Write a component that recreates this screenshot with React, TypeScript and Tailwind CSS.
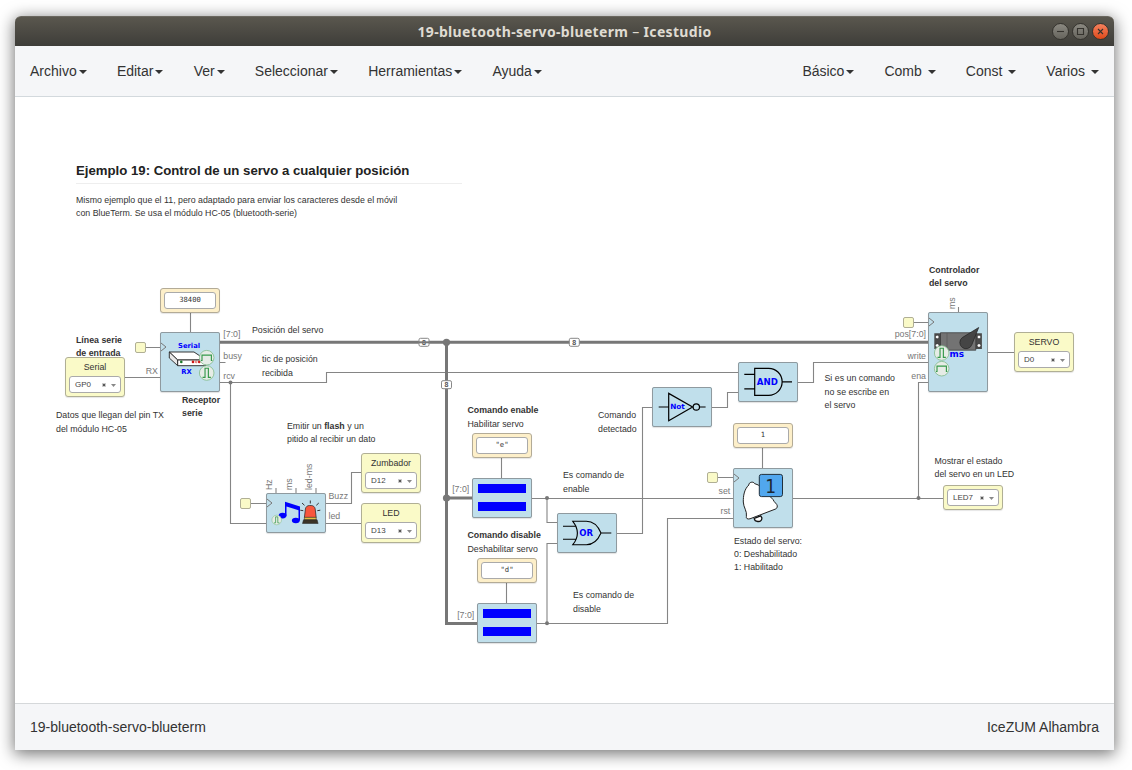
import type { ReactNode } from "react";

const SANS = "font-['Liberation_Sans',Arial,sans-serif]";

function MenuItem({ label, spaced = false }: { label: string; spaced?: boolean }) {
  return (
    <button className="flex items-center text-sm leading-5 text-[#333]">
      <span>{label}</span>
      <span
        className={`${spaced ? "ml-[6px]" : "ml-[2px]"} mt-[2px] h-0 w-0 border-x-4 border-t-4 border-x-transparent border-t-[#333]`}
      />
    </button>
  );
}

function Note({ at, children, leading = "leading-[13px]" }: { at: string; children: ReactNode; leading?: string }) {
  return <p className={`absolute whitespace-nowrap text-[8.8px] text-[#333] ${leading} ${at}`}>{children}</p>;
}

function Block({ at, size = "h-10 w-[60px]", children }: { at: string; size?: string; children: ReactNode }) {
  return (
    <div className={`absolute rounded-[2px] bg-[#c0dfeb] shadow-[0_1px_1px_rgba(0,0,0,0.12)] outline outline-1 -outline-offset-1 outline-[#8f9a9f] ${size} ${at}`}>
      {children}
    </div>
  );
}

function Constant({ at, value }: { at: string; value: string }) {
  return (
    <div className={`absolute flex h-[25px] w-[60px] rounded-[3px] border border-[#b3ab97] bg-[#fdefc9] p-[3px] shadow-[0_1px_1px_rgba(0,0,0,0.1)] ${at}`}>
      <div className="flex flex-1 items-center justify-center rounded-[3px] border border-[#aaa] bg-white font-['DejaVu_Sans_Mono',monospace] text-[7.2px] text-[#333]">
        {value}
      </div>
    </div>
  );
}

function Select({ value }: { value: string }) {
  return (
    <div className="flex h-[17px] shrink-0 items-center rounded-[3px] border border-[#aaa] bg-white pl-[5px] pr-1 text-[8px] leading-none text-[#444]">
      <span className="flex-1">{value}</span>
      <svg className="mr-[5px] h-1 w-1" viewBox="0 0 4 4" stroke="#555" strokeWidth="1.2">
        <path d="M.6.6l2.8 2.8M3.4.6L.6 3.4" />
      </svg>
      <svg className="mt-px h-[3px] w-[5px]" viewBox="0 0 5 3" fill="#888">
        <path d="M0 0h5L2.5 3z" />
      </svg>
    </div>
  );
}

function Pin({ at, label, value }: { at: string; label?: string; value: string }) {
  return (
    <div
      className={`absolute flex w-[60px] flex-col rounded-[3px] border border-[#b0af95] bg-[#fafac8] px-[3px] shadow-[0_1px_1px_rgba(0,0,0,0.1)] ${label ? "h-10" : "h-[25px] pt-[3px]"} ${at}`}
    >
      {label && <div className="h-[18px] text-center text-[8.8px] leading-[18px] text-[#333]">{label}</div>}
      <Select value={value} />
    </div>
  );
}

function ClockPort({ at }: { at: string }) {
  return <div className={`absolute h-[11px] w-[11px] rounded-[2px] border border-[#b0af95] bg-[#fafac8] ${at}`} />;
}

function Pulse({ x, y, r = 7.3, wide = false }: { x: number; y: number; r?: number; wide?: boolean }) {
  return (
    <g transform={`translate(${x} ${y}) scale(${r / 7})`} fill="none">
      <circle r="7" fill="#e6ece6" stroke="#84bd8e" strokeWidth=".8" />
      <path
        d={wide ? "M-5.5 2.7h1V-2.5h9v5.2h1" : "M-4 4.2h2.4v-8.8h3.2v8.8H4"}
        stroke="#35994a"
        strokeWidth="1.1"
      />
    </g>
  );
}

const ClockMark = ({ y }: { y: number }) => (
  <path d={`M1 ${y - 4}l5 4-5 4`} fill="none" stroke="#777" strokeWidth="1" />
);

const BLUE_TEXT = "font-['DejaVu_Sans',sans-serif] font-bold fill-[#0000ff]";

const WIRES = [
  "M190.5 312V333M501.5 458V479M506.5 583V604M762.5 448V469",
  "M146 347.5H160M125 377.5H160M220 362.5H225.5",
  "M220 382.5H326.5V372.5H738M230.5 382.5V523.5H266",
  "M251 503.5H266M326 503.5H351.5V472.5H361M326 523.5H361",
  "M532 498.5H733M547 498.5V522.5H557",
  "M537 623.5H667.5V518.5H733M547 623.5V543.5H557",
  "M617 533.5H642.5V407.5H652M712 407.5H727.5V392.5H738",
  "M798 382.5H813.5V362.5H928",
  "M718 477.5H733M793 498.5H943M918.5 498.5V382.5H928",
  "M914 322.5H928M988 352.5H1014M958.5 307V312",
  "M276 488V493M296 488V493M316 488V493",
];

const PORT_LABELS: { x: number; y: number; text: string; end?: boolean }[] = [
  { x: 223.3, y: 337, text: "[7:0]" },
  { x: 223.3, y: 359, text: "busy" },
  { x: 223.3, y: 379, text: "rcv" },
  { x: 158, y: 374, text: "RX", end: true },
  { x: 328.5, y: 499, text: "Buzz" },
  { x: 328.5, y: 519, text: "led" },
  { x: 469.3, y: 492, text: "[7:0]", end: true },
  { x: 474.3, y: 618, text: "[7:0]", end: true },
  { x: 730.3, y: 494, text: "set", end: true },
  { x: 730.3, y: 514, text: "rst", end: true },
  { x: 926, y: 337, text: "pos[7:0]", end: true },
  { x: 926, y: 359, text: "write", end: true },
  { x: 926, y: 379, text: "ena", end: true },
];

const VERTICAL_LABELS = [
  { x: 271.5, y: 490, text: "Hz" },
  { x: 292, y: 490, text: "ms" },
  { x: 312, y: 490, text: "led-ms" },
  { x: 955, y: 309, text: "ms" },
];

const BUS_BADGES = [
  [424, 342.3],
  [574.3, 342.3],
  [446.5, 384.7],
];

function Wiring() {
  return (
    <svg className={`absolute left-0 top-0 ${SANS}`} width="1132" height="770" fill="none">
      <g stroke="#858585" strokeWidth="1.1">
        {WIRES.map((d) => (
          <path key={d} d={d} />
        ))}
      </g>
      <path d="M220 342.3H928M446.5 342V623.4H477M446.5 498H472" stroke="#777" strokeWidth="3" />
      <g fill="#777">
        <circle cx="446.5" cy="342.3" r="3.6" />
        <circle cx="446.5" cy="498" r="3.6" />
        <circle cx="230.5" cy="382.5" r="2" />
        <circle cx="547" cy="498" r="2" />
        <circle cx="547" cy="623.3" r="2" />
        <circle cx="918.5" cy="498" r="2" />
      </g>
      {BUS_BADGES.map(([x, y]) => (
        <g key={`${x}-${y}`} transform={`translate(${x} ${y})`}>
          <rect x="-5" y="-4" width="10" height="8" rx="1.5" fill="#fff" stroke="#888" />
          <text y="2.6" textAnchor="middle" fontSize="7" fontWeight="bold" fill="#555">
            8
          </text>
        </g>
      ))}
      <path d="M419 342.3h10" stroke="#777" strokeWidth="2" />
      <g fontSize="8.8" fill="#777">
        {PORT_LABELS.map((l) => (
          <text key={`${l.x}-${l.y}`} x={l.x} y={l.y} textAnchor={l.end ? "end" : "start"}>
            {l.text}
          </text>
        ))}
        {VERTICAL_LABELS.map((l) => (
          <text key={`${l.x}-${l.y}`} transform={`translate(${l.x} ${l.y}) rotate(-90)`}>
            {l.text}
          </text>
        ))}
      </g>
    </svg>
  );
}

function SerialArt() {
  return (
    <svg width="60" height="60" fill="none">
      <ClockMark y={15} />
      <text x="18" y="15.5" className={`${BLUE_TEXT} text-[6.8px]`}>Serial</text>
      <g stroke="#222" strokeWidth=".9" fill="#fff" strokeLinejoin="round">
        <path d="M9.3 20H34L46 28H17.7z" />
        <path d="M9.3 20v6l8.4 7.7V28z" fill="#e8e8e8" />
        <path d="M17.7 28H46v5.7H17.7z" />
      </g>
      <circle cx="21.3" cy="29.9" r="1.3" fill="#1c7a2b" />
      <circle cx="33" cy="29.9" r="1.3" fill="#d01818" />
      <circle cx="36.2" cy="29.9" r=".9" stroke="#d01818" strokeWidth=".6" />
      <circle cx="39.2" cy="29.9" r="1.3" fill="#d01818" />
      <text x="21.3" y="41.7" className={`${BLUE_TEXT} text-[6.8px]`}>RX</text>
      <Pulse x={46.7} y={25.7} wide />
      <Pulse x={46.7} y={41} />
    </svg>
  );
}

function BeeperArt() {
  return (
    <svg width="60" height="40" fill="none">
      <ClockMark y={10} />
      <g fill="#0000ff">
        <ellipse cx="16.6" cy="22.6" rx="3.9" ry="2.8" />
        <ellipse cx="29.8" cy="27.5" rx="3.9" ry="2.8" />
        <path d="M19 8.7l15 4.7v14h-1.5V17.2l-12-3.7v9.3H19z" />
      </g>
      <Pulse x={10.7} y={27} r={4.8} />
      <path d="M38.4 24.5l1-8.5c.3-2.2 2-3.5 4-3.5h1.8c2 0 3.7 1.3 4 3.5l1 8.5z" fill="#f8573d" stroke="#222" strokeWidth=".7" />
      <path d="M38.4 24.3h11.8v2.6H38.4z" fill="#e9c044" stroke="#222" strokeWidth=".5" />
      <path d="M37.5 26.8h13.6l1 3.7H36.5z" fill="#3b3428" stroke="#222" strokeWidth=".5" />
      <path
        d="M44.3 7.5v3M36 10l2.5 2.3M52.8 10l-2.5 2.3M34.3 17.2l3 .5M54.3 17.2l-3 .5"
        stroke="#333"
        strokeWidth="1"
      />
    </svg>
  );
}

function EqualsArt() {
  return (
    <div className="flex h-full flex-col gap-[9px] px-1.5 pt-1.5">
      <div className="h-[9px] bg-[#0000ff]" />
      <div className="h-[9px] bg-[#0000ff]" />
    </div>
  );
}

function OrArt() {
  return (
    <svg width="60" height="40" fill="none">
      <path
        d="M6 13.3h13.5M6 26.2h13.5M44 20h10.3M15.8 8.3h13.6C36 8.3 41 13 44 20C41 27 36 31.7 29.4 31.7H15.8Q25 20 15.8 8.3z"
        stroke="#000"
        strokeWidth="1.1"
      />
      <text x="22.2" y="22.8" className={`${BLUE_TEXT} text-[8.5px]`}>OR</text>
    </svg>
  );
}

function NotArt() {
  return (
    <svg width="60" height="40" fill="none">
      <path d="M6.7 20h10M47.6 20h6M16.7 6.4v27.3L40.6 20z" stroke="#000" strokeWidth="1.2" />
      <circle cx="44.3" cy="20" r="3.2" stroke="#000" strokeWidth="1.2" />
      <text x="18.2" y="21.8" className={`${BLUE_TEXT} text-[7.3px]`}>Not</text>
    </svg>
  );
}

function AndArt() {
  return (
    <svg width="60" height="40" fill="none">
      <path
        d="M6.3 12.4h10.4M6.3 26.8h10.4M44 19.8h10M16.7 6.3h14A13.4 13.5 0 0 1 30.7 33.4h-14z"
        stroke="#000"
        strokeWidth="1.2"
      />
      <text x="18.8" y="22.7" className={`${BLUE_TEXT} text-[8.6px]`}>AND</text>
    </svg>
  );
}

function BellArt() {
  return (
    <svg width="60" height="60" fill="none">
      <ClockMark y={10} />
      <path d="M21.2 50.5c.6 4.2 7.6 4 7.7-.6l-1.2-2z" fill="#fff" stroke="#111" strokeWidth="1.3" />
      <path
        d="M15.8 17c-.3-2.8 4.8-4 5.8-1.4l4 1.5L40 31.5c1 2.8 4.3 4.5 4.3 6.4 0 2-.8 2.8-2.2 3.3L17 50.8c-2.6.6-4.2-.2-3.6-2.5.9-5.3-3-8.8-3.1-14.3-.1-6 .8-12.5 5.5-17z"
        fill="#fff"
        stroke="#222"
        strokeWidth="1"
      />
      <rect x="26.3" y="6.4" width="23.2" height="22.2" rx="2.2" fill="#51a7ee" stroke="#20303c" strokeWidth="1" />
      <text x="37.6" y="24.5" textAnchor="middle" className="fill-[#1c2630] font-['DejaVu_Sans_Condensed','DejaVu_Sans',sans-serif] text-[19px]">1</text>
    </svg>
  );
}

function ServoArt() {
  return (
    <svg width="60" height="80" fill="none">
      <ClockMark y={10} />
      <path d="M6.3 21.3h47.6v15.8H6.3z" fill="#4a4a4a" />
      <path d="M12.5 20.7h35.3v17.5H12.5z" fill="#737373" stroke="#333" strokeWidth=".7" />
      <path d="M19 21v17" stroke="#555" strokeWidth=".6" />
      <g fill="#fff" stroke="#222" strokeWidth=".5">
        <circle cx="9.2" cy="25" r="1.8" />
        <circle cx="9.2" cy="33.5" r="1.8" />
        <circle cx="51" cy="25" r="1.8" />
        <circle cx="51" cy="33.5" r="1.8" />
      </g>
      <path d="M50.7 15.5L34.3 25.6a6.2 6.2 0 1 0 9.5 7.2z" fill="#454545" stroke="#222" strokeWidth=".7" />
      <text x="21.6" y="44.5" className={`${BLUE_TEXT} text-[8.9px]`}>ms</text>
      <Pulse x={13.7} y={41} />
      <Pulse x={13.7} y={56.7} wide />
    </svg>
  );
}

function Diagram() {
  return (
    <div className="absolute -left-[15px] -top-[97px] h-[770px] w-[1132px]">
      <Wiring />

      <div className="absolute left-[76px] top-[161px] w-[386px] border-b border-[#eee]">
        <h1 className="h-[22px] whitespace-nowrap text-[13.2px] font-bold leading-5 text-[#222]">
          Ejemplo 19: Control de un servo a cualquier posición
        </h1>
      </div>
      <Note at="left-[76px] top-[194px]">
        Mismo ejemplo que el 11, pero adaptado para enviar los caracteres desde el móvil
        <br />
        con BlueTerm. Se usa el módulo HC-05 (bluetooth-serie)
      </Note>

      <Note at="left-[76px] top-[334px]"><b>Línea serie<br />de entrada</b></Note>
      <Note at="left-[56px] top-[408px]" leading="leading-[14px]">Datos que llegan del pin TX<br />del módulo HC-05</Note>
      <Note at="left-[182px] top-[394px]"><b>Receptor<br />serie</b></Note>
      <Note at="left-[252px] top-[324px]">Posición del servo</Note>
      <Note at="left-[262px] top-[352px]" leading="leading-[14px]">tic de posición<br />recibida</Note>
      <Note at="left-[287px] top-[420px]">Emitir un <b>flash</b> y un<br />pitido al recibir un dato</Note>
      <Note at="left-[467.5px] top-[403px]" leading="leading-[14px]"><b>Comando enable</b><br />Habilitar servo</Note>
      <Note at="left-[598px] top-[408px]" leading="leading-[14px]">Comando<br />detectado</Note>
      <Note at="left-[563px] top-[468px]" leading="leading-[14px]">Es comando de<br />enable</Note>
      <Note at="left-[467.5px] top-[528px]" leading="leading-[14px]"><b>Comando disable</b><br />Deshabilitar servo</Note>
      <Note at="left-[573px] top-[588px]" leading="leading-[14px]">Es comando de<br />disable</Note>
      <Note at="left-[824.5px] top-[372px]" leading="leading-[13.5px]">Si es un comando<br />no se escribe en<br />el servo</Note>
      <Note at="left-[929px] top-[264px]"><b>Controlador<br />del servo</b></Note>
      <Note at="left-[934.5px] top-[455px]">Mostrar el estado<br />del servo en un LED</Note>
      <Note at="left-[734px] top-[535px]">Estado del servo:<br />0: Deshabilitado<br />1: Habilitado</Note>

      <Constant at="left-[160px] top-[287.5px]" value="38400" />
      <Constant at="left-[472px] top-[433px]" value={'"e"'} />
      <Constant at="left-[477px] top-[558px]" value={'"d"'} />
      <Constant at="left-[733px] top-[423px]" value="1" />

      <Pin at="left-[65px] top-[357px]" label="Serial" value="GP0" />
      <Pin at="left-[361px] top-[453px]" label="Zumbador" value="D12" />
      <Pin at="left-[361px] top-[503px]" label="LED" value="D13" />
      <Pin at="left-[1014px] top-[332px]" label="SERVO" value="D0" />
      <Pin at="left-[943px] top-[485px]" value="LED7" />

      <ClockPort at="left-[135px] top-[342px]" />
      <ClockPort at="left-[240px] top-[498px]" />
      <ClockPort at="left-[707px] top-[472px]" />
      <ClockPort at="left-[903px] top-[317px]" />

      <Block at="left-[160px] top-[332px]" size="h-[60px] w-[60px]"><SerialArt /></Block>
      <Block at="left-[266px] top-[493px]"><BeeperArt /></Block>
      <Block at="left-[472px] top-[478px]"><EqualsArt /></Block>
      <Block at="left-[477px] top-[603px]"><EqualsArt /></Block>
      <Block at="left-[557px] top-[513px]"><OrArt /></Block>
      <Block at="left-[652px] top-[387px]"><NotArt /></Block>
      <Block at="left-[738px] top-[362px]"><AndArt /></Block>
      <Block at="left-[733px] top-[468px]" size="h-[60px] w-[60px]"><BellArt /></Block>
      <Block at="left-[928px] top-[312px]" size="h-20 w-[60px]"><ServoArt /></Block>
    </div>
  );
}

function WindowButton({ close = false, children }: { close?: boolean; children: ReactNode }) {
  return (
    <button
      className={`flex h-[17px] w-[17px] items-center justify-center rounded-full border border-[#35332e] bg-linear-to-b ${close ? "from-[#f4805c] to-[#dd4814]" : "from-[#8b8981] to-[#66645d]"}`}
    >
      <svg width="9" height="9" fill="none" stroke="#35332e" strokeWidth="1.1">
        {children}
      </svg>
    </button>
  );
}

export default function App() {
  return (
    <div className={`h-[770px] w-[1132px] overflow-hidden bg-white pl-[15px] pt-4 ${SANS}`}>
      <div className="flex h-[734px] w-[1099px] flex-col rounded-t-[6px] bg-white shadow-[0_3px_16px_1px_rgba(0,0,0,0.55)]">
        <header className="flex h-[30px] shrink-0 items-center justify-end rounded-t-[6px] border-t border-[#6a675f] bg-linear-to-b from-[#5a574e] to-[#3e3d39] pr-[5px]">
          <div className="flex-1 pl-[62px] text-center font-['Noto_Sans','Open_Sans',sans-serif] text-[14px] font-bold leading-none tracking-[0.33px] text-[#dfdbd2]">
            19-bluetooth-servo-blueterm <span className="font-normal">–</span> Icestudio
          </div>
          <div className="flex gap-[3px]">
            <WindowButton><path d="M1 4.5h7" /></WindowButton>
            <WindowButton><path d="M1.5 1.5h6v6h-6z" /></WindowButton>
            <WindowButton close><path d="M2 2l5 5M7 2L2 7" /></WindowButton>
          </div>
        </header>
        <nav className="flex h-[51px] shrink-0 items-center justify-between border-b border-[#d3d9dd] bg-[#f5f6f8] px-[15px]">
          <div className="flex gap-[30.2px]">
            <MenuItem label="Archivo" />
            <MenuItem label="Editar" />
            <MenuItem label="Ver" />
            <MenuItem label="Seleccionar" />
            <MenuItem label="Herramientas" />
            <MenuItem label="Ayuda" />
          </div>
          <div className="flex gap-[30px]">
            <MenuItem label="Básico" />
            <MenuItem label="Comb" spaced />
            <MenuItem label="Const" spaced />
            <MenuItem label="Varios" spaced />
          </div>
        </nav>
        <main className="relative flex-1 overflow-hidden bg-white">
          <Diagram />
        </main>
        <footer className="flex h-[47px] shrink-0 items-center justify-between border-t border-[#d5d8da] bg-[#f5f6f8] px-[15px] text-sm text-[#333]">
          <span>19-bluetooth-servo-blueterm</span>
          <span>IceZUM Alhambra</span>
        </footer>
      </div>
    </div>
  );
}
